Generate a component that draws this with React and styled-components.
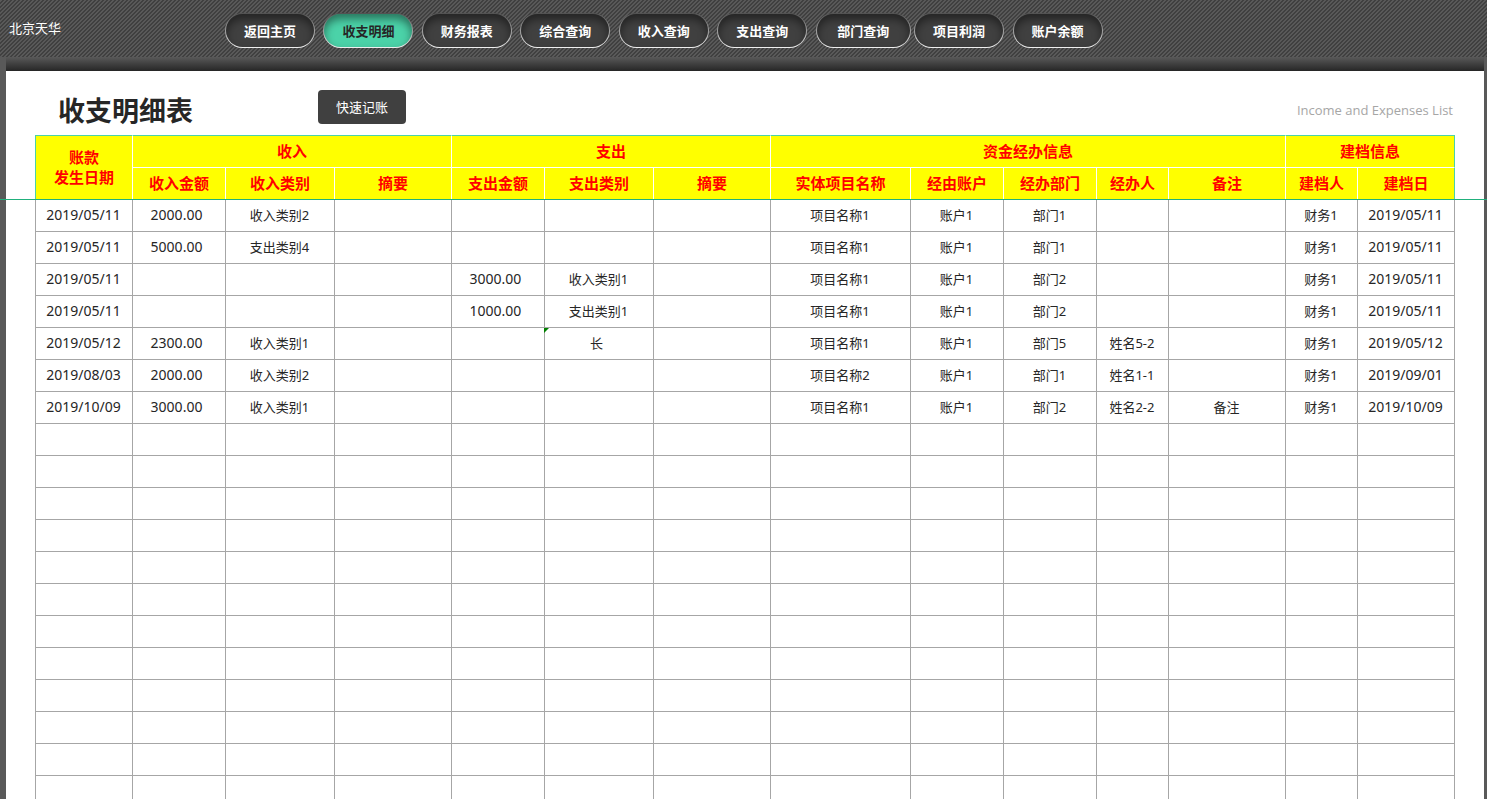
import { Fragment } from "react";
import styled, { createGlobalStyle } from "styled-components";

const GlobalStyle = createGlobalStyle`
  *, *::before, *::after {
    box-sizing: border-box;
  }
  body {
    margin: 0;
    background: #595959;
    color: #262626;
    font-family: "Noto Sans", "Noto Sans CJK SC", sans-serif;
    font-size: 13px;
  }
`;

const stripes = `url("data:image/svg+xml,%3Csvg xmlns='http://www.w3.org/2000/svg' width='4' height='4' shape-rendering='crispEdges'%3E%3Cpath fill='%23595959' d='M0 0h4v4H0z'/%3E%3Cpath fill='%23404040' d='M2 0h2v1H2zM1 1h2v1H1zM0 2h2v1H0zM0 3h1v1H0zM3 3h1v1H3z'/%3E%3C/svg%3E")`;

const PageStyles = styled.div`
  display: flex;
  flex-direction: column;
  height: 100vh;
  overflow: hidden;
`;

const HeaderStyles = styled.header`
  display: flex;
  align-items: flex-start;
  flex: none;
  height: 57px;
  background: ${stripes};
`;

const Company = styled.span`
  flex: none;
  width: 225px;
  padding: 18px 0 0 9px;
  line-height: 20px;
  color: #fff;
`;

const NavStyles = styled.nav`
  display: grid;
  grid-template-columns: repeat(9, 1fr);
  flex: 0 1 886px;
  padding-top: 13px;
`;

const NavButton = styled.button`
  width: ${(props) => (props.$wide ? 95 : 90)}px;
  height: 35px;
  padding: 0;
  border: 1px solid transparent;
  border-radius: 18px;
  background: ${(props) =>
      props.$active
        ? "linear-gradient(#4bd2a8, #4bd2a8)"
        : "linear-gradient(#404040, #404040)"}
      padding-box,
    linear-gradient(#505050, #a0a0a0 50%, #f2f2f2) border-box;
  box-shadow: inset 0 5px 8px rgba(0, 0, 0, 0.45);
  color: ${(props) => (props.$active ? "#262626" : "#fff")};
  font: bold 13px/20px "Noto Sans", "Noto Sans CJK SC", sans-serif;
  white-space: nowrap;
`;

const SheetStyles = styled.main`
  flex: 1;
  min-height: 0;
  margin: 0 3px 0 6px;
  background: #fff;
`;

const Shade = styled.div`
  height: 14px;
  background: linear-gradient(#595959, #262626);
`;

const TitleBar = styled.div`
  display: flex;
  align-items: flex-start;
  height: 64px;
  padding: 19px 31px 0 52px;
`;

const Title = styled.h1`
  width: 260px;
  margin: 0;
  font-size: 27px;
  line-height: 42px;
`;

const QuickButton = styled.button`
  width: 88px;
  height: 34px;
  border: 0;
  border-radius: 4px;
  background: #404040;
  color: #fff;
  font: 13px/20px "Noto Sans", "Noto Sans CJK SC", sans-serif;
`;

const Subtitle = styled.span`
  margin-left: auto;
  font-family: "Open Sans", sans-serif;
  line-height: 40px;
  color: #a6a6a6;
`;

const TableStyles = styled.table`
  width: calc(100% - 58px);
  margin: 0 29px;
  table-layout: fixed;
  border-collapse: separate;
  border-spacing: 0;

  thead {
    position: relative;
  }

  /* frozen pane line, runs past both sides of the table */
  thead::after {
    content: "";
    position: absolute;
    left: -35px;
    right: -32px;
    bottom: 0;
    height: 1px;
    background: #21b07c;
  }

  th {
    height: 32px;
    padding: 0 0 2px;
    background: #ff0;
    border-right: 1px solid #fff;
    border-bottom: 1px solid #fff;
    color: #f00;
    font-size: 15px;
    line-height: 20px;
  }

  thead tr:first-child th {
    height: 33px;
    border-top: 1px solid #4bd2a8;
  }

  thead th:last-child {
    border-right-color: #4bd2a8;
  }

  thead tr:first-child th:first-child {
    border-left: 1px solid #4bd2a8;
  }

  td {
    position: relative;
    height: 32px;
    padding: 0 1px 2px 0;
    border-right: 1px solid #a6a6a6;
    border-bottom: 1px solid #a6a6a6;
    line-height: 20px;
    text-align: center;
    white-space: nowrap;
  }

  td:first-child {
    border-left: 1px solid #a6a6a6;
  }
`;

const DateCell = styled.td`
  font-size: 14px;
`;

const AmountCell = styled(DateCell)`
  && {
    padding-right: 5px;
  }
`;

const FlaggedCell = styled.td`
  && {
    padding-right: 5px;
  }

  &::before {
    content: "";
    position: absolute;
    top: 0;
    left: -1px;
    border-top: 5px solid #008000;
    border-right: 5px solid transparent;
  }
`;

const navItems = [
  "返回主页",
  "收支明细",
  "财务报表",
  "综合查询",
  "收入查询",
  "支出查询",
  "部门查询",
  "项目利润",
  "账户余额",
];

const columnWidths = [
  98, 93, 109, 117, 93, 109, 117, 140, 93, 93, 72, 117, 72, 97,
];

const groups = [
  { name: "收入", columns: ["收入金额", "收入类别", "摘要"] },
  { name: "支出", columns: ["支出金额", "支出类别", "摘要"] },
  {
    name: "资金经办信息",
    columns: ["实体项目名称", "经由账户", "经办部门", "经办人", "备注"],
  },
  { name: "建档信息", columns: ["建档人", "建档日"] },
];

const records = [
  ["2019/05/11", "2000.00", "收入类别2", "", "", "", "", "项目名称1", "账户1", "部门1", "", "", "财务1", "2019/05/11"],
  ["2019/05/11", "5000.00", "支出类别4", "", "", "", "", "项目名称1", "账户1", "部门1", "", "", "财务1", "2019/05/11"],
  ["2019/05/11", "", "", "", "3000.00", "收入类别1", "", "项目名称1", "账户1", "部门2", "", "", "财务1", "2019/05/11"],
  ["2019/05/11", "", "", "", "1000.00", "支出类别1", "", "项目名称1", "账户1", "部门2", "", "", "财务1", "2019/05/11"],
  ["2019/05/12", "2300.00", "收入类别1", "", "", "长", "", "项目名称1", "账户1", "部门5", "姓名5-2", "", "财务1", "2019/05/12"],
  ["2019/08/03", "2000.00", "收入类别2", "", "", "", "", "项目名称2", "账户1", "部门1", "姓名1-1", "", "财务1", "2019/09/01"],
  ["2019/10/09", "3000.00", "收入类别1", "", "", "", "", "项目名称1", "账户1", "部门2", "姓名2-2", "备注", "财务1", "2019/10/09"],
];

const emptyRows = Array.from({ length: 12 }, () => columnWidths.map(() => ""));

function Cell({ column, value }) {
  if (column === 0 || column === 13) return <DateCell>{value}</DateCell>;
  if (column === 1 || column === 4) return <AmountCell>{value}</AmountCell>;
  if (value === "长") return <FlaggedCell>{value}</FlaggedCell>;
  return <td>{value}</td>;
}

function Nav() {
  return (
    <NavStyles>
      {navItems.map((item) => (
        <NavButton
          key={item}
          type="button"
          $active={item === "收支明细"}
          $wide={item === "部门查询"}
        >
          {item}
        </NavButton>
      ))}
    </NavStyles>
  );
}

function Ledger() {
  return (
    <TableStyles>
      <colgroup>
        {columnWidths.map((width, i) => (
          <col key={i} style={{ width: `${(width / 1420) * 100}%` }} />
        ))}
      </colgroup>
      <thead>
        <tr>
          <th rowSpan={2} scope="col">
            账款
            <br />
            发生日期
          </th>
          {groups.map((group) => (
            <th key={group.name} colSpan={group.columns.length} scope="colgroup">
              {group.name}
            </th>
          ))}
        </tr>
        <tr>
          {groups.map((group) => (
            <Fragment key={group.name}>
              {group.columns.map((column) => (
                <th key={column} scope="col">
                  {column}
                </th>
              ))}
            </Fragment>
          ))}
        </tr>
      </thead>
      <tbody>
        {[...records, ...emptyRows].map((row, i) => (
          <tr key={i}>
            {row.map((value, column) => (
              <Cell key={column} column={column} value={value} />
            ))}
          </tr>
        ))}
      </tbody>
    </TableStyles>
  );
}

export default function App() {
  return (
    <PageStyles>
      <GlobalStyle />
      <HeaderStyles>
        <Company>北京天华</Company>
        <Nav />
      </HeaderStyles>
      <SheetStyles>
        <Shade />
        <TitleBar>
          <Title>收支明细表</Title>
          <QuickButton type="button">快速记账</QuickButton>
          <Subtitle>Income and Expenses List</Subtitle>
        </TitleBar>
        <Ledger />
      </SheetStyles>
    </PageStyles>
  );
}
